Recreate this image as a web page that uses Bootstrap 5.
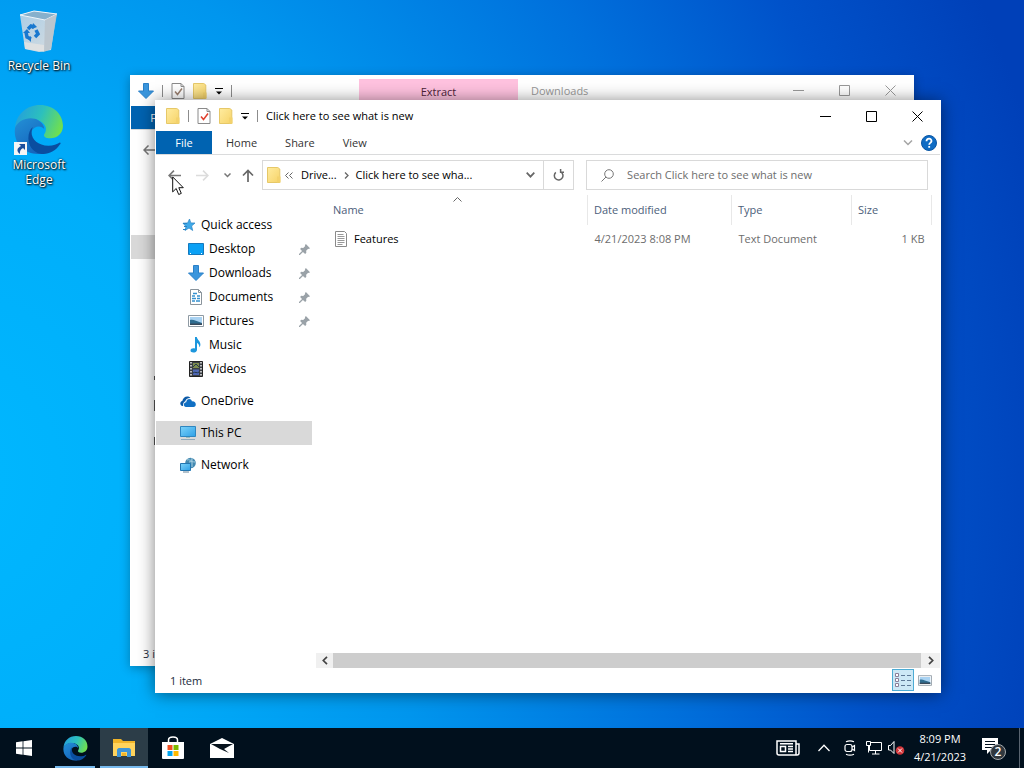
<!DOCTYPE html>
<html lang="en">
<head>
<meta charset="utf-8">
<meta name="viewport" content="width=device-width, initial-scale=1">
<title>Click here to see what is new</title>
<link href="https://cdn.jsdelivr.net/npm/bootstrap@5.3.0/dist/css/bootstrap.min.css" rel="stylesheet">
<style>
  body { font: 11px/16px "Open Sans", "Noto Sans", sans-serif; color: #000; background: #00b0fa radial-gradient(ellipse 1140px 1180px at -6% 62%, #00b8ff 0%, #00aefa 26%, #0096ee 46%, #0070dc 68%, #0052ca 84%, #0040b8 100%); }
  button { border: 0; background: none; padding: 0; color: inherit; }
  a { color: inherit; text-decoration: none; }
  svg { display: block; flex: none; }

  .desk-icons { width: 78px; padding-top: 10px; gap: 32px; font-size: 12px; }
  .desk-icons a { color: #fff; line-height: 15px; text-shadow: 1px 1px 2px #000, 0 0 2px #000; }

  .win { position: absolute; background: #fff; border: 1px solid #fff; }
  .win-back { inset: 75px 110px 62px 130px; box-shadow: 0 2px 10px rgba(0,0,0,.3); }
  .win-front { inset: 100px 83px 35px 155px; box-shadow: 0 1px 16px rgba(0,0,0,.5); }
  .titlebar { height: 30px; }
  .titlebar .sep { width: 1px; height: 12px; background: #8c8c8c; }
  .quick { gap: 8px; padding-left: 10px; }
  .win-back .quick { flex: 0 0 228px; padding-left: 7px; }
  .ctl { width: 46px; height: 28px; display: grid; place-items: center; }
  .context-tab { flex: 0 0 159px; margin-top: 3px; line-height: 26px; background: #ffc2df; color: #4d2337; }
  .dim { color: #999; }

  .ribbon { height: 24px; border-bottom: 1px solid #dadbdc; color: #333; }
  .ribbon button { padding: 0 14px; }
  .ribbon .file { width: 56px; padding: 0; background: #0063b1; color: #fff; }

  .locbar { height: 40px; padding: 5px 12px; color: #777; }
  .locbar .box { border: 1px solid #d9d9d9; }
  .history { gap: 15px; padding-right: 8px; }
  .address { flex: 312 1 0; color: #000; }
  .finder { flex: 342 1 0; margin-left: 12px; }
  .finder input { border: 0; outline: 0; min-width: 0; background: none; color: #6d6d6d; }
  .finder input::placeholder { color: #6d6d6d; opacity: 1; }
  .reload { width: 30px; border-left: 1px solid #d9d9d9 !important; }

  .tree { width: 156px; padding-top: 18px; flex: none; font-size: 12px; }
  .tree a { height: 24px; padding-left: 24px; gap: 5px; display: flex; align-items: center; }
  .tree a.sub { padding-left: 32px; }
  .tree a.top { margin-top: 8px; }
  .tree a.on { background: #d9d9d9; }
  .tree .pin { margin-left: auto; margin-right: 2px; }

  .files { table-layout: fixed; width: 100%; color: #6d6d6d; }
  .files th { height: 30px; font-weight: 400; color: #4c607a; padding: 0 6px; border-right: 1px solid #e8e8e8; position: relative; }
  .files td { height: 28px; padding: 0 7px; }
  .files th:first-child, .files td:first-child { padding-left: 9px; }
  .sorted { position: absolute; left: 49%; top: 2px; }

  .hbar { height: 15px; background: #f0f0f0; }
  .hbar button { width: 17px; display: grid; place-items: center; }
  .hbar .thumb { background: #cdcdcd; }
  .status { height: 24px; padding-left: 14px; color: #222b3d; }
  .win-back .status { padding-left: 12px; }
  .status span { padding-top: 2px; }
  .status button { width: 22px; height: 22px; display: grid; place-items: center; }
  .status .on { background: #cce8f6; border: 1px solid #4dacd4; }

  .back-row { height: 24px; margin-top: 65px; margin-bottom: 116px; background: #d9d9d9; }
  .cursor-arrow { position: absolute; left: 172px; top: 176px; }

  .taskbar { height: 40px; background: #01101d; color: #fff; }
  .tb { width: 48px; height: 40px; display: grid; place-items: center; }
  .tb-start { margin-right: 2px; }
  .tb-open { background: linear-gradient(#76b9ed, #76b9ed) 50% 100% / 40px 2px no-repeat; }
  .tb-active { background: linear-gradient(#76b9ed, #76b9ed) 50% 100% / 48px 2px no-repeat #2c3d48; }
  .tray { gap: 6px; }
  .clock { width: 58px; line-height: 18px; }
  .peek { width: 5px; height: 40px; border-left: 1px solid #596470 !important; }
</style>
</head>
<body>
<svg width="0" height="0" class="position-absolute" aria-hidden="true">
  <defs>
    <linearGradient id="fold" x2="1" y2="1"><stop stop-color="#ffeca0"/><stop offset="1" stop-color="#f6d368"/></linearGradient>
    <linearGradient id="edgeTop" x1="0" y1=".3" x2="1" y2=".6"><stop stop-color="#249fdc"/><stop offset=".5" stop-color="#2cc0bd"/><stop offset="1" stop-color="#72e04c"/></linearGradient>
    <linearGradient id="edgeLeft" x1="0" y1="0" x2=".6" y2="1"><stop stop-color="#2390d6"/><stop offset="1" stop-color="#1565bd"/></linearGradient>
    <linearGradient id="screen" x2="1" y2="1"><stop stop-color="#7dd3fa"/><stop offset="1" stop-color="#2ea0e6"/></linearGradient>
    <linearGradient id="bin" x2="1" y2="1"><stop stop-color="#a9cde6"/><stop offset="1" stop-color="#d6dce0"/></linearGradient>
    <symbol id="i-folder" viewBox="0 0 14 16"><path d="M.5.5h10.300l2 1.500v13.500H.5z" fill="url(#fold)" stroke="#e6c868"/><path d="M10 9.500h3.500v6H10z" fill="#f3d26d"/></symbol>
    <symbol id="i-check" viewBox="0 0 14 16"><path d="M1 .5h9l3 3v12H1z" fill="#fff" stroke="#8a8a8a"/><path d="M10 .5v3h3" fill="none" stroke="#8a8a8a"/><path d="M4 8.500l2.500 3L11 5.500" fill="none" stroke="currentColor" stroke-width="1.500"/></symbol>
    <symbol id="i-down" viewBox="0 0 16 16"><path d="M5.500.5h5v7.500h5L8 15.500.5 8h5z" fill="#3b96dd" stroke="#2a80c8"/></symbol>
    <symbol id="i-more" viewBox="0 0 8 7"><path d="M0 .5h8" stroke="currentColor"/><path d="M1 3.500h6L4 6.500z" fill="currentColor"/></symbol>
    <symbol id="i-pin" viewBox="0 0 12 12"><path d="M7.500 0L12 4.500l-1.200 1-.8-.3-2.200 2.200.2 2.200-1.300 1.200L4.300 8.600 1 12H0v-1l3.300-3.300L1.200 5.500l1.200-1.300 2.200.2L6.800 2.200 6.400 1.300z" fill="#9aa2a8"/></symbol>
    <symbol id="i-edge" viewBox="0 0 48 48">
      <path d="M1 22C2 9 12 0 25 0c13 0 22 9 22 20 0 8-6 12-12 12-5 0-7-2-6-4 3-4 2-9-3-12C18 11 5 14 1 22z" fill="url(#edgeTop)"/>
      <path d="M1 22c3-8 15-12 23-7 3 2 5 5 5 8-3-4-10-3-12 2-3 8 2 17 11 21-1 1-3 1-5 1C9 47-1 36 1 22z" fill="url(#edgeLeft)"/>
      <path d="M18 21c-4 9 3 18 15 18 5 0 8-1 11-3 1 0 1 1 0 2C38 47 28 49 21 45 12 40 12 26 18 21z" fill="#0a4ea0"/>
    </symbol>
    <symbol id="i-pic" viewBox="0 0 16 12"><path d="M.5.5h15v11H.5z" fill="#fff" stroke="#8f9aa3"/><path d="M2 2h12v8H2z" fill="#a9d2f2"/><path d="M2 5c3-1 6 1 12 3v2H2z" fill="#2f6c8f"/><path d="M2 8.500h12V10H2z" fill="#38495a"/></symbol>
    <symbol id="i-min" viewBox="0 0 11 11"><path d="M0 5.500h11" stroke="currentColor"/></symbol>
    <symbol id="i-max" viewBox="0 0 11 11"><path d="M.5.5h10v10H.5z" fill="none" stroke="currentColor"/></symbol>
    <symbol id="i-close" viewBox="0 0 11 11"><path d="M.5.5l10 10M10.500.5l-10 10" stroke="currentColor"/></symbol>
    <symbol id="i-left" viewBox="0 0 12 10"><path d="M12 5H1M5.500.5L1 5l4.500 4.500" fill="none" stroke="currentColor" stroke-width="1.500"/></symbol>
  </defs>
</svg>

<div class="vh-100 d-flex flex-column overflow-hidden">
  <main class="flex-grow-1 position-relative">
    <div class="desk-icons d-flex flex-column text-center">
      <a href="#" class="d-flex flex-column align-items-center">
        <svg width="42" height="44" viewBox="0 0 42 44" class="mb-1">
          <path d="M2 5L16 1l23 3-1 3-5 33-12 2-14-3z" fill="url(#bin)"/>
          <path d="M2 5L16 1l23 3-12 6z" fill="#86b0cc" stroke="#eef5fa"/>
          <path d="M27 10l12-6-6 35-7 3z" fill="#b9c2c9" opacity=".8"/>
          <path d="M6 32l20 3v7L7 39z" fill="#e8e5e2" opacity=".7"/>
          <g fill="none" stroke="#1878cf" stroke-width="3.500"><path d="M10 19l3-3 3 1"/><path d="M18 20l2 4-3 3"/><path d="M8 22l1 5 4 2"/></g>
          <path d="M15 13l4 4-5 2zM13 26v6l-3-3zM5 23l4-4 3 4z" fill="#1878cf"/>
        </svg>
        <span>Recycle Bin</span>
      </a>
      <a href="#" class="d-flex flex-column align-items-center">
        <span class="position-relative">
          <svg width="50" height="50" viewBox="0 0 48 48"><use href="#i-edge"/></svg>
          <svg width="13" height="13" viewBox="0 0 13 13" class="position-absolute start-0 bottom-0"><path d="M0 0h13v13H0z" fill="#f5f5f5"/><path d="M5 2h6v6L9 6c-3 2-3 3-3 6C2 9 3 6 7 4z" fill="#1d4f9c"/></svg>
        </span>
        <span class="px-2" style="padding-top:2px">Microsoft Edge</span>
      </a>
    </div>

    <section class="win win-back d-flex flex-column overflow-hidden" aria-label="Downloads">
      <header class="titlebar d-flex">
        <div class="quick d-flex align-items-center">
          <svg width="16" height="16"><use href="#i-down"/></svg>
          <span class="sep"></span>
          <svg width="14" height="16" style="color:#9a8070"><use href="#i-check"/></svg>
          <svg width="14" height="16"><use href="#i-folder"/></svg>
          <svg width="8" height="7"><use href="#i-more"/></svg>
          <span class="sep"></span>
        </div>
        <span class="context-tab text-center">Extract</span>
        <span class="dim flex-grow-1 align-self-center" style="padding-left:13px">Downloads</span>
        <div class="dim d-flex">
          <button class="ctl" aria-label="Minimize"><svg width="11" height="11"><use href="#i-min"/></svg></button>
          <button class="ctl" aria-label="Maximize"><svg width="11" height="11"><use href="#i-max"/></svg></button>
          <button class="ctl" aria-label="Close"><svg width="11" height="11"><use href="#i-close"/></svg></button>
        </div>
      </header>
      <nav class="ribbon d-flex"><button class="file">File</button></nav>
      <div class="locbar d-flex align-items-center"><svg width="12" height="10"><use href="#i-left"/></svg></div>
      <div class="back-row"></div>
      <svg width="30" height="80" viewBox="0 0 30 80"><path d="M23.500 1v4M23.500 25v11M23.500 62v8" stroke="#555"/></svg>
      <footer class="status d-flex align-items-center mt-auto"><span>3 items</span></footer>
    </section>

    <section class="win win-front d-flex flex-column" aria-label="Click here to see what is new">
      <header class="titlebar d-flex align-items-center">
        <div class="quick d-flex align-items-center flex-grow-1">
          <svg width="14" height="16"><use href="#i-folder"/></svg>
          <span class="sep"></span>
          <svg width="14" height="16" style="color:#e0402e"><use href="#i-check"/></svg>
          <svg width="14" height="16"><use href="#i-folder"/></svg>
          <svg width="8" height="7"><use href="#i-more"/></svg>
          <span class="sep"></span>
          <span>Click here to see what is new</span>
        </div>
        <button class="ctl" aria-label="Minimize"><svg width="11" height="11"><use href="#i-min"/></svg></button>
        <button class="ctl" aria-label="Maximize"><svg width="11" height="11"><use href="#i-max"/></svg></button>
        <button class="ctl" aria-label="Close"><svg width="11" height="11"><use href="#i-close"/></svg></button>
      </header>

      <nav class="ribbon d-flex">
        <button class="file">File</button>
        <button>Home</button>
        <button>Share</button>
        <button>View</button>
        <button class="ms-auto p-0 me-2" aria-label="Expand the ribbon"><svg width="10" height="6" viewBox="0 0 10 6"><path d="M1 .5l4 4 4-4" fill="none" stroke="#a5a5a5" stroke-width="1.500"/></svg></button>
        <button class="p-0" style="margin-right:3px" aria-label="Help"><svg width="16" height="16" viewBox="0 0 16 16"><circle cx="8" cy="8" r="7.500" fill="#0f6cc4" stroke="#0a56a4"/><path d="M5.500 6.200c0-3.600 5.200-3.200 5 0-.2 1.800-2.300 1.700-2.300 3.600M8.200 11v1.800" fill="none" stroke="#fff" stroke-width="1.800"/></svg></button>
      </nav>

      <div class="locbar d-flex align-items-center">
        <div class="history d-flex align-items-center">
          <button aria-label="Back"><svg width="13" height="11"><use href="#i-left"/></svg></button>
          <button aria-label="Forward"><svg width="13" height="11" viewBox="0 0 12 10"><path d="M0 5h11M6.500.5L11 5 6.500 9.500" fill="none" stroke="#dcdcdc" stroke-width="1.500"/></svg></button>
          <button aria-label="Recent locations"><svg width="7" height="5" viewBox="0 0 7 5"><path d="M.5.500l3 3 3-3" fill="none" stroke="#777" stroke-width="1.500"/></svg></button>
          <button aria-label="Up" style="margin-left:-4px"><svg width="12" height="13" viewBox="0 0 12 13"><path d="M6 13V1.500M1 6.500l5-5 5 5" fill="none" stroke="#666" stroke-width="1.700"/></svg></button>
        </div>
        <div class="address box d-flex align-items-stretch h-100">
          <div class="d-flex align-items-center flex-grow-1 ps-1">
            <svg width="14" height="16"><use href="#i-folder"/></svg>
            <svg width="8" height="7" viewBox="0 0 8 7" class="mx-1"><path d="M3.500.5l-3 3 3 3M7.500.5l-3 3 3 3" fill="none" stroke="#666"/></svg>
            <a href="#" class="ms-1">Drive...</a>
            <svg width="5" height="7" viewBox="0 0 5 7" style="margin:0 7px"><path d="M1 .5l3 3-3 3" fill="none" stroke="#666" stroke-width="1.300"/></svg>
            <a href="#">Click here to see wha...</a>
            <button class="ms-auto me-1 px-1" aria-label="Previous locations"><svg width="9" height="6" viewBox="0 0 9 6"><path d="M.7.7l3.800 4 3.800-4" fill="none" stroke="#666" stroke-width="1.700"/></svg></button>
          </div>
          <button class="reload d-grid" style="place-items:center" aria-label="Refresh"><svg width="11" height="12" viewBox="0 0 11 12"><path d="M3.200 2.900a4.300 4.300 0 1 0 5 .5M3.400 0v3.200H0" transform="translate(11 0) scale(-1 1)" fill="none" stroke="#666" stroke-width="1.500"/></svg></button>
        </div>
        <label class="finder box d-flex align-items-center h-100" aria-label="Search">
          <svg width="13" height="13" viewBox="0 0 13 13" style="margin:0 13px 0 14px"><circle cx="8" cy="5" r="4.300" fill="none" stroke="#777"/><path d="M5 8L.5 12.500" stroke="#777"/></svg>
          <input type="text" class="flex-grow-1 p-0" placeholder="Search Click here to see what is new">
        </label>
      </div>

      <div class="d-flex flex-grow-1">
        <nav class="tree">
          <a href="#"><svg width="16" height="16" viewBox="0 0 16 16"><path d="M9.500 2l1.300 3.900L15 6l-3.400 3 1.100 4.500L9 11l-4 2.500L6 9.500 3 6.200l4.600-.3z" fill="#3fa9e8" stroke="#2a84c4" stroke-width=".7"/><path d="M3 6.500h4M4 9.500h3M3 12.500h3" stroke="#2a84c4"/></svg>Quick access</a>
          <a href="#" class="sub"><svg width="16" height="12" viewBox="0 0 16 12"><path d="M.5.5h15v11H.5z" fill="#0ba1f5" stroke="#1579bd"/><path d="M2 10.500h1M13 10.500h1" stroke="#fff"/></svg>Desktop<svg width="11" height="11" class="pin"><use href="#i-pin"/></svg></a>
          <a href="#" class="sub"><svg width="16" height="16"><use href="#i-down"/></svg>Downloads<svg width="11" height="11" class="pin"><use href="#i-pin"/></svg></a>
          <a href="#" class="sub"><svg width="16" height="16" viewBox="0 0 16 16"><path d="M2.500.5h8l3 3v12h-11z" fill="#fff" stroke="#8a949c"/><path d="M10.500.5v3h3" fill="none" stroke="#8a949c"/><path d="M5 4.500h4M4 7h3M9 7h3M4 9.500h4M9 9.500h3M4 12h3M8 12h4" stroke="#3591d0" stroke-width="1.500"/></svg>Documents<svg width="11" height="11" class="pin"><use href="#i-pin"/></svg></a>
          <a href="#" class="sub"><svg width="16" height="12"><use href="#i-pic"/></svg>Pictures<svg width="11" height="11" class="pin"><use href="#i-pin"/></svg></a>
          <a href="#" class="sub"><svg width="16" height="16" viewBox="0 0 16 16"><path d="M7 0h1.800c.4 3 4.200 4.200 3.500 8.500-.3 1-.8 1.500-1 2 .2-2.500-.7-3.800-2.300-4.500v7c0 3-6.500 3.600-6.500.6 0-2.100 2.500-2.800 4.500-2.100z" fill="#1d97dd"/></svg>Music</a>
          <a href="#" class="sub"><svg width="16" height="16" viewBox="0 0 16 16"><path d="M1.500.5h13v15h-13z" fill="#3a3f45" stroke="#222"/><path d="M3 1v14M13 1v14" stroke="#e8e8e8" stroke-width="1.500" stroke-dasharray="1.500 1.500"/><path d="M5 2h6v5H5z" fill="#7c8b4c"/><path d="M5 8.500h6V14H5z" fill="#4f68b5"/><path d="M5 6l3-3 3 3M5 12c2-2 4 1 6-1" stroke="#23384d" fill="none"/></svg>Videos</a>
          <a href="#" class="top"><svg width="16" height="16" viewBox="0 0 16 16"><path d="M2.500 13C-.5 12.500-.3 8.500 2.300 8 3 4 7.500 2 10.500 5c-3-.2-5 1.500-5.300 3.500C3.500 8.700 2.800 11 3.200 13z" fill="#0d5aa7"/><path d="M6 14c-3-.2-2.600-4.800.2-4.700C6.600 5.500 11 5 12 8.400c4.500-.5 5 5.600 1.400 5.600z" fill="#1170c4"/></svg>OneDrive</a>
          <a href="#" class="top on"><svg width="16" height="16" viewBox="0 0 16 16"><path d="M.5 1.500h15v10H.5z" fill="url(#screen)" stroke="#2f86bf"/><path d="M1 14.500h14" stroke="#8fa9ba"/><path d="M6 12.500h4" stroke="#9bb"/></svg>This PC</a>
          <a href="#" class="top"><svg width="16" height="16" viewBox="0 0 16 16"><circle cx="10.500" cy="6" r="5.300" fill="#4489b0"/><path d="M7 3c2-1 3 1 5 0M9 5c3-1 4 0 6 0M12 1v9" stroke="#a5cfe2" fill="none"/><path d="M.5 6.500h10v7H.5z" fill="url(#screen)" stroke="#2376b0"/><path d="M3 15h6" stroke="#67849a"/></svg>Network</a>
        </nav>

        <div class="d-flex flex-column flex-grow-1" style="padding-left:4px">
          <div class="flex-grow-1 px-2">
            <table class="files">
              <colgroup><col><col style="width:144px"><col style="width:120px"><col style="width:80px"></colgroup>
              <thead><tr>
                <th scope="col">Name<svg width="9" height="5" viewBox="0 0 9 5" class="sorted"><path d="M.5 4.500l4-4 4 4" fill="none" stroke="#666"/></svg></th>
                <th scope="col">Date modified</th><th scope="col">Type</th><th scope="col">Size</th>
              </tr></thead>
              <tbody><tr>
                <td><a href="#" class="d-flex align-items-center text-black" style="gap:5px"><svg width="16" height="16" viewBox="0 0 16 16"><path d="M2.500.5h9l2 2v13h-11z" fill="#fff" stroke="#8a8a8a"/><path d="M4.500 3.500h6M4.500 5.500h7M4.500 7.500h7M4.500 9.500h7M4.500 11.500h7M4.500 13.500h5" stroke="#999"/></svg>Features</a></td>
                <td>4/21/2023 8:08 PM</td><td>Text Document</td><td class="text-end">1 KB</td>
              </tr></tbody>
            </table>
          </div>
          <div class="hbar d-flex">
            <button aria-label="Scroll left"><svg width="6" height="9" viewBox="0 0 6 9"><path d="M5 .8L1.300 4.500 5 8.200" fill="none" stroke="#444" stroke-width="1.700"/></svg></button>
            <span class="thumb flex-grow-1"></span>
            <button aria-label="Scroll right" style="width:19px"><svg width="6" height="9" viewBox="0 0 6 9"><path d="M1 .8l3.700 3.700L1 8.200" fill="none" stroke="#444" stroke-width="1.700"/></svg></button>
          </div>
        </div>
      </div>

      <footer class="status d-flex align-items-center">
        <span class="flex-grow-1">1 item</span>
        <button class="on" aria-label="Details view"><svg width="16" height="14" viewBox="0 0 16 14"><path d="M.5.5h3v3h-3zM.5 5.500h3v3h-3zM.5 10.500h3v3h-3z" fill="#fff" stroke="#8a7f9a"/><path d="M6 2.500h4M12 2.500h4M6 7.500h4M12 7.500h4M6 12.500h4M12 12.500h4" stroke="#5d7896"/></svg></button>
        <button class="me-1" aria-label="Large icons"><svg width="14" height="11"><use href="#i-pic"/></svg></button>
      </footer>
    </section>

    <svg width="12" height="20" viewBox="0 0 12 20" class="cursor-arrow"><path d="M.7.900v15l3.500-3.400 2.500 6 2.600-1.100-2.500-5.700h4.500z" fill="#fff" stroke="#111"/></svg>
  </main>

  <footer class="taskbar d-flex align-items-center justify-content-between flex-shrink-0">
    <div class="d-flex" style="gap:1px">
      <button class="tb tb-start" aria-label="Start"><svg width="16" height="16" viewBox="0 0 16 16"><path d="M0 2.200L6.600 1.300v6.300H0zM7.400 1.200L16 0v7.600H7.400zM0 8.400h6.600v6.300L0 13.800zM7.400 8.400H16V16l-8.600-1.200z" fill="#fff"/></svg></button>
      <button class="tb tb-open" aria-label="Microsoft Edge"><svg width="25" height="25"><use href="#i-edge"/></svg></button>
      <button class="tb tb-active" aria-label="File Explorer"><svg width="22" height="20" viewBox="0 0 22 20"><path d="M0 1h8l2 2h12v15H0z" fill="#f0b429"/><path d="M0 5h22v13H0z" fill="#ffd35c"/><path d="M4 19v-7c0-1 1-2 2-2h10c1 0 2 1 2 2v7h-4v-5H8v5z" fill="#3e94d6"/><path d="M9 15h4v3H9z" fill="#f0b429"/></svg></button>
      <button class="tb" aria-label="Microsoft Store"><svg width="24" height="24" viewBox="0 0 24 24"><path d="M7.500 7V4c0-4 9-4 9 0v3" fill="none" stroke="#fff" stroke-width="1.500"/><path d="M1 6h22v16q0 1-1 1H2q-1 0-1-1z" fill="#fff"/><path d="M6.500 9h5v5h-5z" fill="#f25022"/><path d="M12.500 9h5v5h-5z" fill="#7fba00"/><path d="M6.500 15h5v5h-5z" fill="#00a4ef"/><path d="M12.500 15h5v5h-5z" fill="#ffb900"/></svg></button>
      <button class="tb" aria-label="Mail"><svg width="24" height="20" viewBox="0 0 24 20"><path d="M0 6l12-6 12 6v14H0z" fill="#fff"/><path d="M1 6h22l-9 5 5 4-9-4z" fill="#06121d"/></svg></button>
    </div>
    <div class="tray d-flex align-items-center">
      <button aria-label="News" style="margin-right:12px"><svg width="24" height="16" viewBox="0 0 24 16" fill="none" stroke="#fff" stroke-width="1.500"><path d="M20 14.500V1H1v12q0 2 2 2h18q2 0 2-2V4h-3"/><path d="M4.500 6.500h5v5h-5zM4 3.800h13M12 6.500h5M12 9h5M12 11.500h5"/></svg></button>
      <button aria-label="Show hidden icons" class="me-1"><svg width="12" height="8" viewBox="0 0 12 8"><path d="M.5 7L6 1.300 11.500 7" fill="none" stroke="#fff" stroke-width="1.300"/></svg></button>
      <button aria-label="Meet Now" class="px-1"><svg width="12" height="16" viewBox="0 0 12 16" fill="none" stroke="#fff" stroke-width="1.200"><path d="M2 1.800q4-2 8 0M2 14.200q4 2 8 0"/><rect x="1" y="4.500" width="7" height="7" rx="2"/><path d="M8 7l2.500-1.500v5L8 9"/></svg></button>
      <button aria-label="Network"><svg width="16" height="14" viewBox="0 0 16 14" fill="none" stroke="#fff"><path d="M5 1.500h10.500v8H3.500V5M9.500 9.500v3.500M6 13h7.500M.5.500h4v4h-4zM2.500 4.500v7"/></svg></button>
      <button aria-label="Volume muted"><svg width="17" height="14" viewBox="0 0 17 14"><path d="M.5 4.500h2l3.500-4v12l-3.500-3.500h-2z" fill="none" stroke="#fff"/><circle cx="12" cy="9.500" r="4.300" fill="#d13438"/><path d="M10 7.500l4 4M14 7.500l-4 4" stroke="#fff"/></svg></button>
      <button class="clock text-center">8:09 PM<br>4/21/2023</button>
      <button aria-label="Notifications" class="position-relative" style="margin:0 7px"><svg width="24" height="24" viewBox="0 0 24 24"><path d="M0 2h16v12H9l-4 4v-4H0z" fill="#fff"/><path d="M3 5.500h10M3 8.500h10M3 11.500h7" stroke="#01101d"/><circle cx="16" cy="16" r="7.500" fill="#30373d" stroke="#a5a9ac"/><text x="16" y="20" text-anchor="middle" fill="#fff" font-size="12" font-weight="600">2</text></svg></button>
      <button class="peek" aria-label="Show desktop"></button>
    </div>
  </footer>
</div>
<script src="https://cdn.jsdelivr.net/npm/bootstrap@5.3.0/dist/js/bootstrap.bundle.min.js"></script>
</body>
</html>
